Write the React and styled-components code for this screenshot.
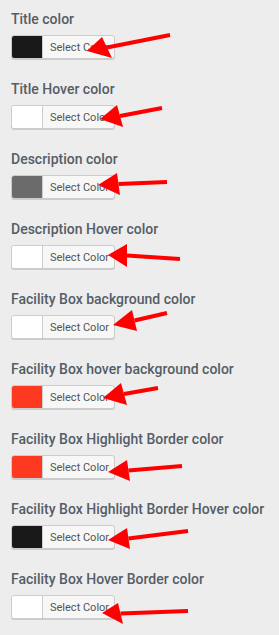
import React from "react";
import styled, { createGlobalStyle } from "styled-components";

const Global = createGlobalStyle`
  html, body { margin: 0; padding: 0; background: #ededed; }
  body { font-family: Roboto, "Liberation Sans", sans-serif; }
`;

const Page = styled.div`
  position: relative;
  width: 279px;
  height: 635px;
  padding: 9px 0 0 11px;
  box-sizing: border-box;
  overflow: hidden;
`;

const Field = styled.div`
  display: flex;
  flex-direction: column;
  align-items: flex-start;
  height: 70px;
`;

const Label = styled.div`
  font-size: 14px;
  line-height: 20px;
  font-weight: 500;
  color: #555d66;
  margin-bottom: 6px;
  white-space: nowrap;
`;

const Picker = styled.button`
  display: flex;
  align-items: stretch;
  width: 104px;
  height: 24px;
  padding: 0;
  border: 1px solid #cccccc;
  border-radius: 3px;
  box-shadow: 0 1px 0 #cccccc;
  background: #f7f7f7;
  overflow: hidden;
  box-sizing: border-box;
  cursor: pointer;
`;

const Swatch = styled.span`
  width: 30px;
  flex: none;
  background: ${(p) => p.$color};
  border-right: 1px solid #cccccc;
`;

const PickerText = styled.span`
  flex: 1;
  display: flex;
  align-items: center;
  padding-left: 7px;
  font-family: Roboto, "Liberation Sans", sans-serif;
  font-size: 11px;
  color: #555555;
  white-space: nowrap;
`;

const Overlay = styled.svg`
  position: absolute;
  left: 0;
  top: 0;
  pointer-events: none;
`;

const fields = [
  ["Title color", "#191919"],
  ["Title Hover color", "#ffffff"],
  ["Description color", "#6b6b6b"],
  ["Description Hover color", "#ffffff"],
  ["Facility Box background color", "#ffffff"],
  ["Facility Box hover background color", "#fd3a20"],
  ["Facility Box Highlight Border color", "#fd3a20"],
  ["Facility Box Highlight Border Hover color", "#191919"],
  ["Facility Box Hover Border color", "#ffffff"],
];

// tip, tail, head upper, head lower
const arrows = [
  [[87, 51], [170, 35], [102, 37], [112, 58]],
  [[100, 119], [162, 108], [117, 105], [123, 127]],
  [[98, 185], [167, 182], [117, 173], [120, 195]],
  [[108, 255], [180, 259], [127, 244], [127, 267]],
  [[113, 325], [167, 313], [132, 310], [137, 331]],
  [[103, 398], [158, 388], [121, 383], [127, 405]],
  [[108, 472], [182, 466], [127, 460], [130, 481]],
  [[108, 540], [188, 531], [127, 528], [130, 549]],
  [[102, 613], [188, 611], [118, 603], [123, 624]],
];

function Arrow({ tip, tail, up, low }) {
  const bx = (up[0] + low[0]) / 2;
  const by = (up[1] + low[1]) / 2;
  return (
    <g fill="#ff0000" stroke="none">
      <line x1={tail[0]} y1={tail[1]} x2={bx} y2={by} stroke="#ff0000" strokeWidth="4" />
      <polygon points={`${tip[0]},${tip[1]} ${up[0]},${up[1]} ${low[0]},${low[1]}`} />
    </g>
  );
}

export default function App() {
  return (
    <>
      <Global />
      <Page>
        {fields.map(([label, color]) => (
          <Field key={label}>
            <Label>{label}</Label>
            <Picker type="button">
              <Swatch $color={color} />
              <PickerText>Select Color</PickerText>
            </Picker>
          </Field>
        ))}
        <Overlay width="279" height="635" viewBox="0 0 279 635">
          {arrows.map(([tip, tail, up, low], i) => (
            <Arrow key={i} tip={tip} tail={tail} up={up} low={low} />
          ))}
        </Overlay>
      </Page>
    </>
  );
}
